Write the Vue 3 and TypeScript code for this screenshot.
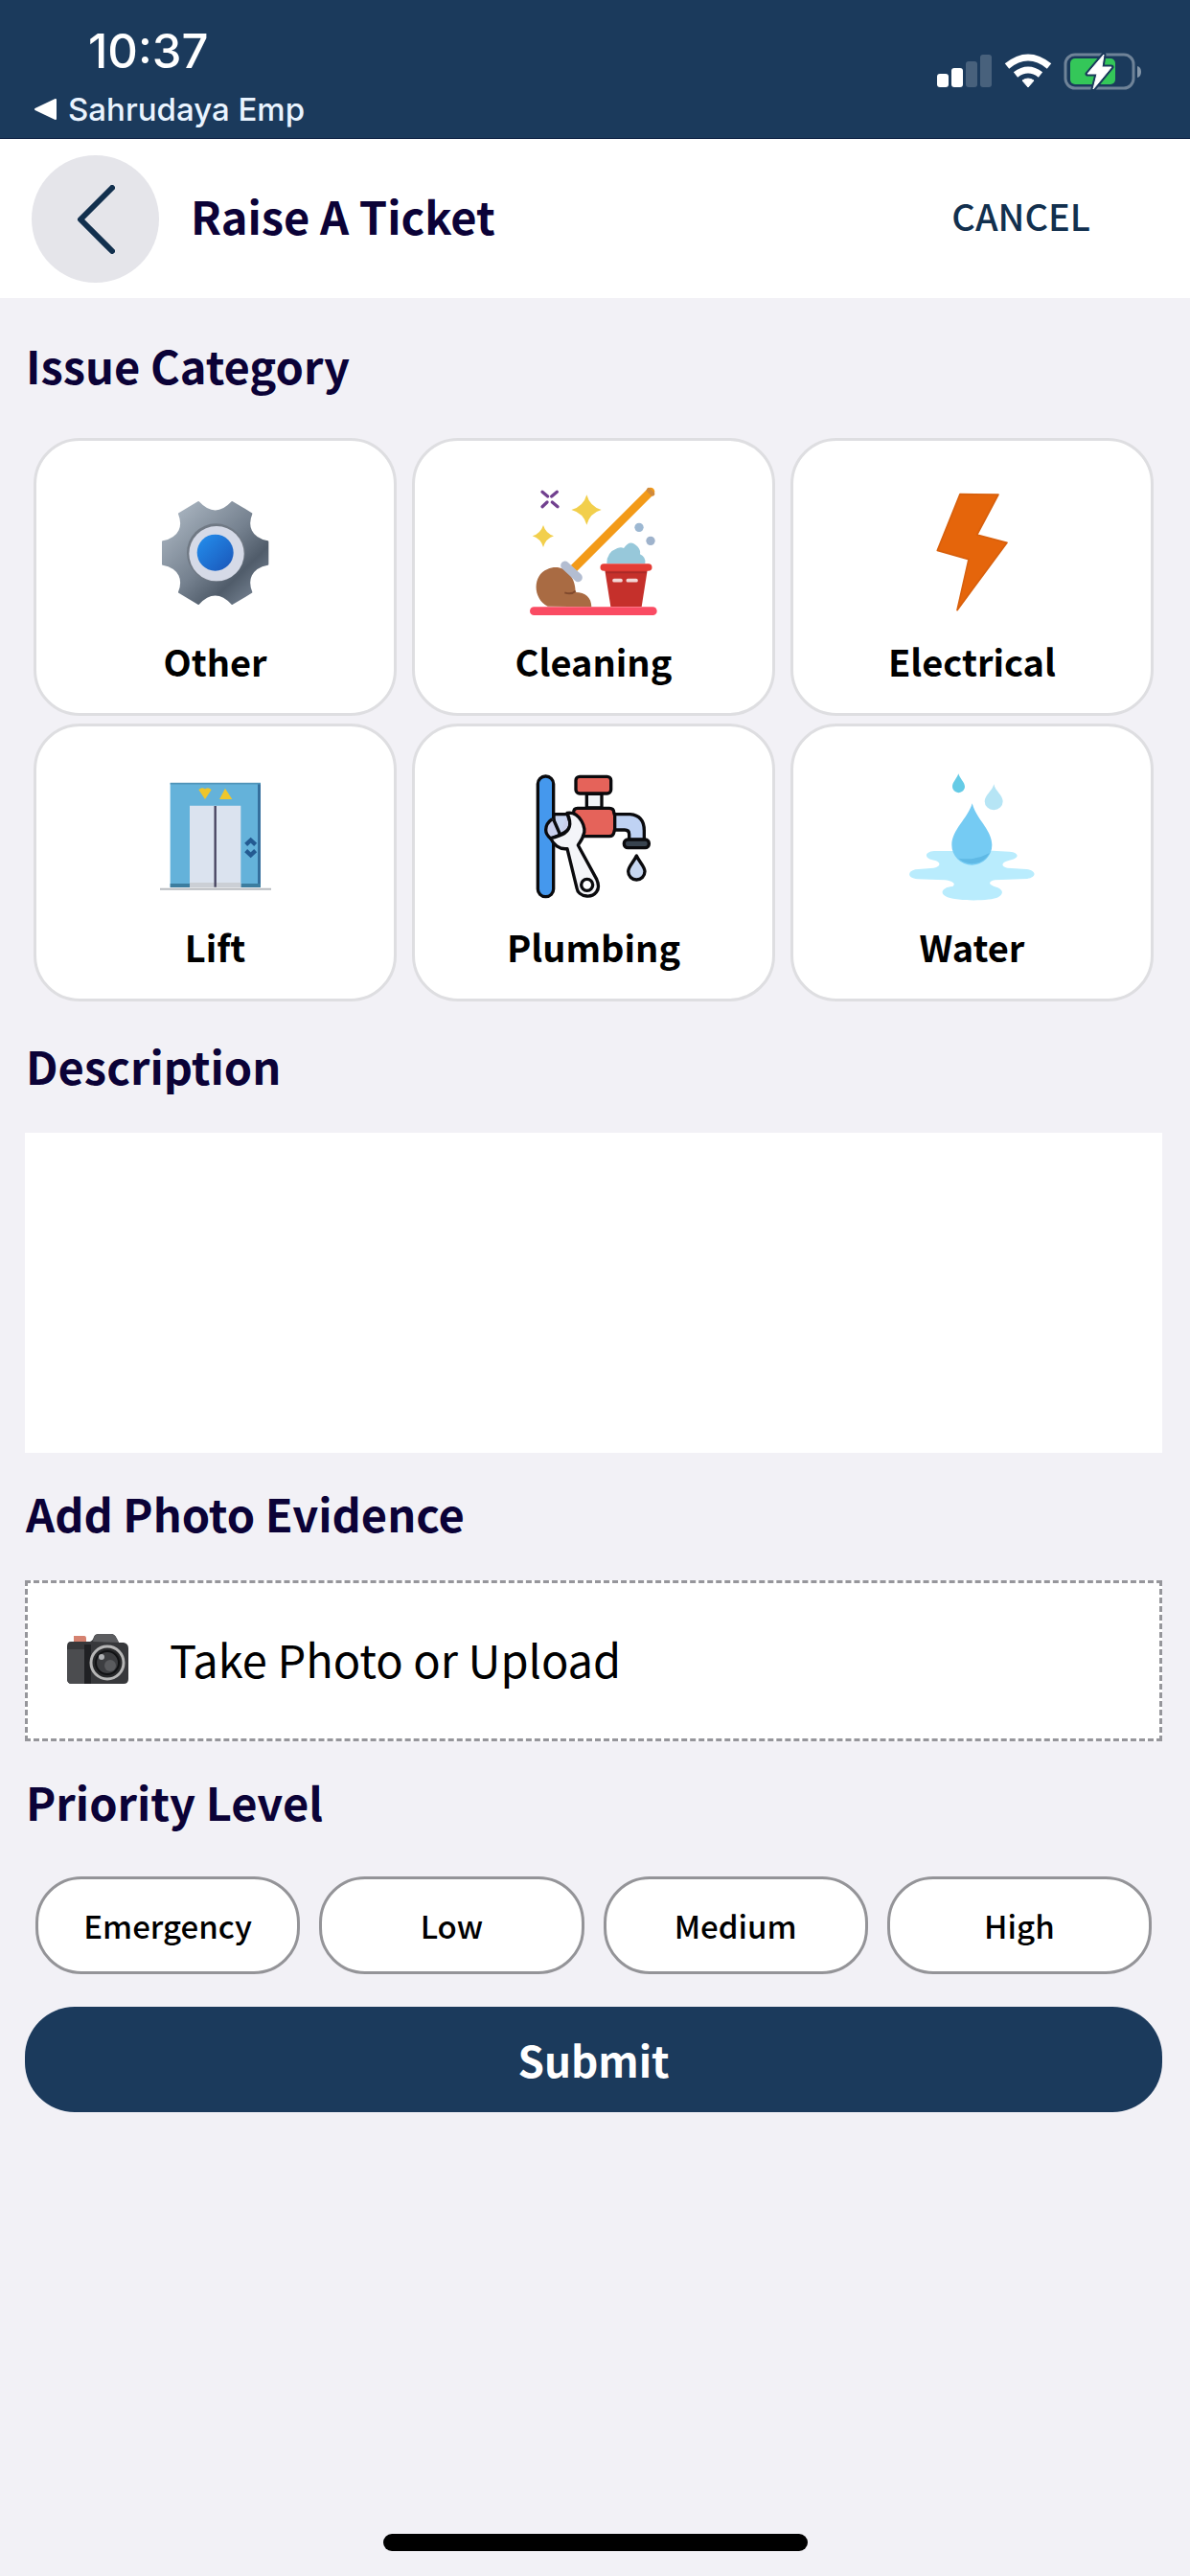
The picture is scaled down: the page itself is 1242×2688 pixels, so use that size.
<script setup lang="ts">
import { ref } from 'vue'

type IconName = 'gear' | 'cleaning' | 'bolt' | 'lift' | 'tap' | 'water'

interface Category {
  label: string
  icon: IconName
}

const categories: Category[] = [
  { label: 'Other', icon: 'gear' },
  { label: 'Cleaning', icon: 'cleaning' },
  { label: 'Electrical', icon: 'bolt' },
  { label: 'Lift', icon: 'lift' },
  { label: 'Plumbing', icon: 'tap' },
  { label: 'Water', icon: 'water' },
]
const priorities: string[] = ['Emergency', 'Low', 'Medium', 'High']

const category = ref<string>('')
const priority = ref<string>('')
const description = ref<string>('')
</script>

<template>
  <div class="page">
    <div class="status">
      <div class="status-left">
        <span class="time">10:37</span>
        <a class="return" href="#">
          <svg width="23" height="22" viewBox="0 0 23 22" aria-hidden="true"><path d="M1 11 22 1v20z" fill="#fff" stroke="#fff" stroke-width="2" stroke-linejoin="round" /></svg>
          Sahrudaya Emp
        </a>
      </div>
      <svg class="status-icons" width="214" height="40" viewBox="978 54 214 40" aria-hidden="true">
        <g fill="#fff">
          <rect x="978" y="77" width="12" height="14" rx="3" />
          <rect x="993" y="71" width="12" height="20" rx="3" />
          <rect x="1008" y="64" width="12" height="27" rx="3" opacity=".2" />
          <rect x="1023" y="57" width="12" height="34" rx="3" opacity=".2" />
          <path d="M1067 84q6-4 12 0l-6 7z" stroke="#fff" stroke-linejoin="round" />
        </g>
        <g fill="none" stroke="#fff" stroke-width="7">
          <path d="M1051 69q22-18 44 0" />
          <path d="M1060 78q13-10 26 0" />
        </g>
        <rect x="1112" y="57" width="71" height="35" rx="10" fill="none" stroke="#6f8398" stroke-width="3" />
        <path d="M1187 69q4 1 4 6t-4 6z" fill="#8496a8" />
        <rect x="1117" y="61" width="47" height="27" rx="5" fill="#34c759" />
        <path d="M1152 57 1135 77h10l-4 16 19-23h-10z" fill="#fff" stroke="#1b3a5c" stroke-width="5" stroke-linejoin="round" />
        <path d="M1152 57 1135 77h10l-4 16 19-23h-10z" fill="#fff" stroke="#fff" stroke-linejoin="round" />
      </svg>
    </div>

    <header class="header">
      <button class="back" type="button" aria-label="Back">
        <svg width="40" height="72" viewBox="0 0 40 72" aria-hidden="true"><path d="M37 3 4 36l33 33" fill="none" stroke="#12304e" stroke-width="6" stroke-linecap="round" stroke-linejoin="round" /></svg>
      </button>
      <h1>Raise A Ticket</h1>
      <button class="cancel" type="button">CANCEL</button>
    </header>

    <main class="main">
      <h2>Issue Category</h2>
      <div class="categories">
        <button
          v-for="item in categories"
          :key="item.label"
          class="category"
          type="button"
          :aria-pressed="category === item.label"
          @click="category = item.label"
        >
          <svg v-if="item.icon === 'gear'" class="art" viewBox="472 504 402 402" aria-hidden="true">
            <defs>
              <linearGradient id="steel" x1="0" y1="0" x2="1" y2="1">
                <stop offset="0" stop-color="#b4bfca" />
                <stop offset=".5" stop-color="#75818f" />
                <stop offset=".72" stop-color="#505c6a" />
                <stop offset="1" stop-color="#8592a2" />
              </linearGradient>
              <linearGradient id="hub" x1="0" y1="0" x2="1" y2="1">
                <stop offset="0" stop-color="#2490ee" />
                <stop offset="1" stop-color="#1a55b8" />
              </linearGradient>
            </defs>
            <path d="M725 552 785 588C770 625 780 665 836 676V746C780 757 770 797 785 834L725 870C690 832 654 832 619 870L559 834C574 797 564 757 508 746V676C564 665 574 625 559 588L619 552C654 590 690 590 725 552z" fill="url(#steel)" stroke="url(#steel)" stroke-width="6" stroke-linejoin="round" />
            <circle cx="674" cy="710" r="91" fill="#707984" />
            <circle cx="676" cy="713" r="86" fill="#d5dae7" />
            <circle cx="672" cy="710" r="57" fill="url(#hub)" />
          </svg>

          <svg v-else-if="item.icon === 'cleaning'" class="art" viewBox="399 205 402 402" aria-hidden="true">
            <path d="m438 221 17 14m29-14-17 14m-29 32 15-14m33 14-17-14" stroke="#71408f" stroke-width="10" stroke-linecap="round" />
            <path d="M577 230q10 37 46 47-36 10-46 47-10-37-48-47 38-10 48-47zM441 325q8 26 33 34-25 8-33 35-8-27-34-35 26-8 34-34z" fill="#f2cf4c" />
            <path d="M777 220 538 459" stroke="#f39a18" stroke-width="26" stroke-linecap="round" />
            <path d="m771 215 12 12" stroke="#cf8a3c" stroke-width="14" stroke-linecap="round" />
            <path d="M455 579c-48-24-48-98-1-116 44-20 88 14 88 72 31 0 50 17 50 46z" fill="#a96b43" />
            <path d="M542 531q-12 13-34 5" fill="none" stroke="#80492d" stroke-width="6" />
            <path d="m509 451 41 38" stroke="#b3bdd1" stroke-width="27" stroke-linecap="round" />
            <path d="M640 445q-1-35 33-48 12-4 20 0 20-31 43-5 11 12 8 24 19 9 16 29z" fill="#97c8da" />
            <circle cx="741" cy="332" r="14" fill="#9db8d2" /><circle cx="777" cy="374" r="14" fill="#9fb3cc" />
            <path d="M633 460H768L749 580H652z" fill="#c5302b" />
            <path d="M631 457H770" stroke="#e43d36" stroke-width="23" stroke-linecap="round" />
            <path d="M636 473H765" stroke="#a92a28" stroke-width="5" />
            <path d="M663 498h21m22 0h26" stroke="#f3d7d6" stroke-width="11" stroke-linecap="round" />
            <path d="M412 594H784" stroke="#fa4b63" stroke-width="26" stroke-linecap="round" />
          </svg>

          <svg v-else-if="item.icon === 'bolt'" class="art" viewBox="411 204 402 402" aria-hidden="true">
            <path d="M573 227 693 228 626 354 720 379 564 590 600 431 502 403z" fill="#e5650b" stroke="#d8600d" stroke-width="5" stroke-linejoin="round" />
          </svg>

          <svg v-else-if="item.icon === 'lift'" class="art" viewBox="411 201 402 402" aria-hidden="true">
            <path d="M470 235H753V560H470z" fill="#64b2da" />
            <path d="M744 237H753V560H744z" fill="#356f9d" />
            <path d="M470 236H753" stroke="#4f94b9" stroke-width="5" />
            <path d="M470 549H531V561H470zM691 549H753V561H691z" fill="#3c7d9f" />
            <path d="M531 305H691V560H531z" fill="#dbe3ef" />
            <path d="M531 546H691V562H531z" fill="#cbcfd5" />
            <path d="M611 306V560" stroke="#46435f" stroke-width="7" />
            <path d="M559 255q10-10 20-2 10-8 20 2L579 285z" fill="#eec52b" />
            <path d="m642 251 22 34h-40z" fill="#efc72c" />
            <path d="m707 427 15-14 15 14m-30 19 15 14 15-14" fill="none" stroke="#235a91" stroke-width="13" />
            <path d="M438 566H786" stroke="#b9bcc0" stroke-width="6" />
          </svg>

          <svg v-else-if="item.icon === 'tap'" class="art" viewBox="399 201 402 402" aria-hidden="true">
            <g stroke="#0a0a0d" stroke-width="10" stroke-linejoin="round">
              <rect x="424" y="213" width="49" height="377" rx="24" fill="#4598ed" />
              <path d="M474 332H550V405H474z" fill="#c9d6f2" />
              <path d="M577 268H624V312H577z" fill="#f1f3f7" />
              <rect x="543" y="214" width="110" height="53" rx="12" fill="#e5635a" />
              <path d="M548 313H648Q662 313 662 326 674 357 662 390 660 401 648 401H548Q536 401 536 390V326Q536 313 548 313z" fill="#e5635a" />
              <path d="M665 332H713Q757 336 757 383V412H710V395Q710 381 696 381H665z" fill="#bfd2f3" />
              <rect x="694" y="411" width="78" height="26" rx="12" fill="#38434f" />
              <path d="M733 462C724 482 707 495 707 511A26 26 0 0 0 759 511C759 495 742 482 733 462z" fill="#c7d7f1" />
              <path d="M469 347Q449 361 449 381 449 395 464 408 474 406 494 396L473 348M516 329 525 358Q528 382 494 396" fill="#c9cfec" />
              <path d="M516 328C555 322 580 378 566 398 564 411 553 422 550 429L608 535C624 570 601 590 577 588 559 587 548 576 546 563L516 440C490 443 472 426 464 407 480 404 493 398 499 396 528 382 530 359 516 328z" fill="#f4f5f9" />
              <circle cx="578" cy="553" r="18" fill="#fff" />
            </g>
          </svg>

          <svg v-else class="art" viewBox="411 201 402 402" aria-hidden="true">
            <path d="M547 447H492C459 450 459 472 496 477 515 484 511 497 491 500L433 505C407 511 407 531 440 535L526 538C550 541 561 550 550 558 518 560 508 579 528 589 552 605 668 605 692 592 713 579 708 565 678 557 659 551 665 541 682 538L783 534C814 529 813 508 781 504L721 500C700 496 701 482 727 476 760 471 760 452 728 449L675 446z" fill="#b9ecfd" />
            <path d="M611 298C597 346 547 381 547 428A62 62 0 0 0 673 428C673 381 623 346 611 298z" fill="#75cbf3" />
            <path d="M568 470A63 63 0 0 0 666 453Q620 478 568 470z" fill="#5fb9e5" />
            <path d="M568 205C562 222 549 232 549 246A19 18 0 0 0 588 246C588 232 573 222 568 205z" fill="#65cbe6" />
            <path d="M679 238C674 259 650 273 650 292A28 26 0 0 0 707 292C707 273 683 259 679 238z" fill="#b6e5f5" />
          </svg>
          <span>{{ item.label }}</span>
        </button>
      </div>

      <h2><label for="description">Description</label></h2>
      <textarea id="description" v-model="description" class="description"></textarea>

      <h2>Add Photo Evidence</h2>
      <button class="upload" type="button">
        <svg width="66" height="54" viewBox="0 0 66 54" aria-hidden="true">
          <path d="M8 3h11q2 0 2 3v5H8z" fill="#d58270" />
          <path d="M5 9H25Q28 8 29 4 30 1 34 1H47Q51 1 53 6L55 10H60Q65 11 65 16V48Q65 53 60 53H6Q1 53 1 48V14Q1 9 5 9z" fill="#37383b" />
          <path d="M28 9Q29 1 34 1H47Q51 1 55 10z" fill="#5b5c5f" />
          <path d="M1 17H19V53H6Q1 53 1 48z" fill="#4b4c4f" />
          <path d="M19 12h7v41h-7z" fill="#202124" />
          <circle cx="43" cy="31" r="17" fill="#27282a" stroke="#b6b6b6" stroke-width="3" />
          <circle cx="43" cy="31" r="12" fill="#3d3e41" stroke="#111214" stroke-width="2" />
          <circle cx="46" cy="34" r="6" fill="#5a5b5e" />
          <circle cx="37" cy="25" r="3" fill="#aeb0b3" />
        </svg>
        <span>Take Photo or Upload</span>
      </button>

      <h2>Priority Level</h2>
      <div class="priorities">
        <button
          v-for="level in priorities"
          :key="level"
          class="priority"
          type="button"
          :aria-pressed="priority === level"
          @click="priority = level"
        >
          {{ level }}
        </button>
      </div>

      <button class="submit" type="submit">Submit</button>
    </main>

    <div class="home-bar"></div>
  </div>
</template>

<style>
body {
  margin: 0;
  background: #f2f1f6;
}
</style>

<style scoped>
.page {
  display: flex;
  flex-direction: column;
  min-height: 100vh;
  box-sizing: border-box;
  padding-bottom: 26px;
  background: #f2f1f6;
  color: #000;
  font-family: "Noto Sans CJK SC", "Noto Sans", sans-serif;
}

button {
  margin: 0;
  padding: 0;
  border: 0;
  background: none;
  color: inherit;
  font: inherit;
  cursor: pointer;
}

.status {
  display: flex;
  justify-content: space-between;
  align-items: flex-start;
  padding: 26px 50px 10px 36px;
  border-bottom: 1px solid #0c1f42;
  background: #1b3a5c;
  color: #fff;
  font-family: Inter, sans-serif;
}

.status-left {
  display: flex;
  flex-direction: column;
  gap: 12px;
}

.time {
  padding-left: 56px;
  font-size: 49px;
  font-weight: 500;
  line-height: 56px;
}

.return {
  display: flex;
  align-items: center;
  gap: 12px;
  color: #eaf4ff;
  font-size: 33px;
  font-weight: 500;
  line-height: 40px;
  text-decoration: none;
}

.status-icons {
  margin-top: 28px;
}

.header {
  display: flex;
  align-items: center;
  padding: 17px 104px 16px 33px;
  background: #fff;
}

.back {
  display: flex;
  align-items: center;
  justify-content: center;
  width: 133px;
  height: 133px;
  border-radius: 50%;
  background: #e5e5ea;
}

h1,
h2 {
  margin: 0;
  color: #0b0237;
  font-size: 47px;
  font-weight: 700;
  line-height: 60px;
}

h1 {
  flex: 1;
  margin-left: 33px;
  padding-bottom: 8px;
}

.cancel {
  padding-bottom: 8px;
  color: #12304e;
  font-size: 38px;
  font-weight: 500;
  line-height: 48px;
}

.main {
  display: flex;
  flex-direction: column;
  padding: 0 29px 0 26px;
}

h2 {
  margin: 33px 1px 40px;
}

h2:first-child {
  margin-top: 40px;
}

.categories {
  display: grid;
  grid-template-columns: repeat(3, 1fr);
  gap: 8px 16px;
  padding: 6px 9px 4px;
}

.category {
  display: flex;
  flex-direction: column;
  align-items: center;
  gap: 24px;
  padding: 48px 0 30px;
  border: 3px solid #dedee1;
  border-radius: 48px;
  background: #fff;
  font-size: 38px;
  font-weight: 700;
  line-height: 48px;
}

.art {
  width: 134px;
  height: 134px;
}

.description {
  display: block;
  width: 100%;
  height: 334px;
  box-sizing: border-box;
  padding: 24px;
  border: 0;
  background: #fff;
  color: inherit;
  font: inherit;
  font-size: 38px;
  resize: none;
}

.upload {
  display: flex;
  align-items: center;
  gap: 42px;
  padding: 49px 40px 53px;
  border: 3px dashed #96969b;
  background: #fff;
  font-size: 47px;
  line-height: 60px;
}

.priorities {
  display: grid;
  grid-template-columns: repeat(4, 1fr);
  gap: 20px;
  padding: 8px 11px 34px;
}

.priority {
  padding: 24px 0;
  border: 3px solid #949498;
  border-radius: 48px;
  background: #fff;
  font-size: 33px;
  font-weight: 500;
  line-height: 48px;
}

.submit {
  padding: 25px 0;
  border-radius: 52px;
  background: #1b3a5c;
  color: #fff;
  font-size: 44px;
  font-weight: 700;
  line-height: 60px;
}

.home-bar {
  width: 443px;
  height: 18px;
  margin: auto auto 0;
  border-radius: 9px;
  background: #000;
}
</style>
